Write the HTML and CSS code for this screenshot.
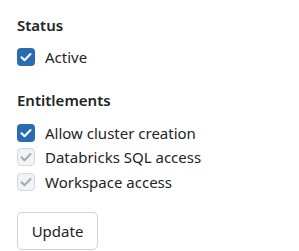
FILE: index.html
```html
<!DOCTYPE html>
<html lang="en">
<head>
    <meta charset="UTF-8">
    <title>User settings</title>
    <link rel="stylesheet" href="styles.css">
</head>
<body>
    <form class="panel">
        <h3 class="section-title">Status</h3>
        <label class="check-row">
            <span class="check checked">
                <svg viewBox="0 0 18 18"><path d="M4.5 9.3l3 2.9 6-6.2"/></svg>
            </span>
            Active
        </label>

        <h3 class="section-title section-gap">Entitlements</h3>
        <label class="check-row">
            <span class="check checked">
                <svg viewBox="0 0 18 18"><path d="M4.5 9.3l3 2.9 6-6.2"/></svg>
            </span>
            Allow cluster creation
        </label>
        <label class="check-row">
            <span class="check disabled">
                <svg viewBox="0 0 18 18"><path d="M4.5 9.3l3 2.9 6-6.2"/></svg>
            </span>
            Databricks SQL access
        </label>
        <label class="check-row">
            <span class="check disabled">
                <svg viewBox="0 0 18 18"><path d="M4.5 9.3l3 2.9 6-6.2"/></svg>
            </span>
            Workspace access
        </label>

        <button type="button" class="btn">Update</button>
    </form>
</body>
</html>
```

FILE: styles.css
```css
body {
    margin: 0;
    background-color: #fff;
    font-family: "Segoe UI", "Noto Sans", Arial, sans-serif;
    color: #212529;
}

.panel {
    padding: 14px 17px 0;
}

.section-title {
    margin: 0 0 9px;
    font-size: 15px;
    font-weight: 600;
    line-height: 22px;
}

.section-gap {
    margin-top: 19px;
    margin-bottom: 10px;
}

.check-row {
    display: flex;
    align-items: center;
    gap: 10px;
    height: 24.5px;
    font-size: 15px;
}

.check {
    width: 18px;
    height: 18px;
    box-sizing: border-box;
    border-radius: 4px;
    display: flex;
}

.check svg {
    width: 18px;
    height: 18px;
    fill: none;
    stroke-width: 2;
    stroke-linecap: round;
    stroke-linejoin: round;
}

.check.checked {
    background-color: #2b6cb0;
}

.check.checked svg {
    stroke: #fff;
}

.check.disabled {
    background-color: #f1f3f5;
    border: 1px solid #d5d9de;
}

.check.disabled svg {
    margin: -1px;
    stroke: #a3aab3;
}

.btn {
    margin-top: 18px;
    width: 81px;
    height: 38px;
    font-family: inherit;
    font-size: 15px;
    color: #212529;
    background-color: #fff;
    border: 1px solid #ced4da;
    border-radius: 5px;
}
```
